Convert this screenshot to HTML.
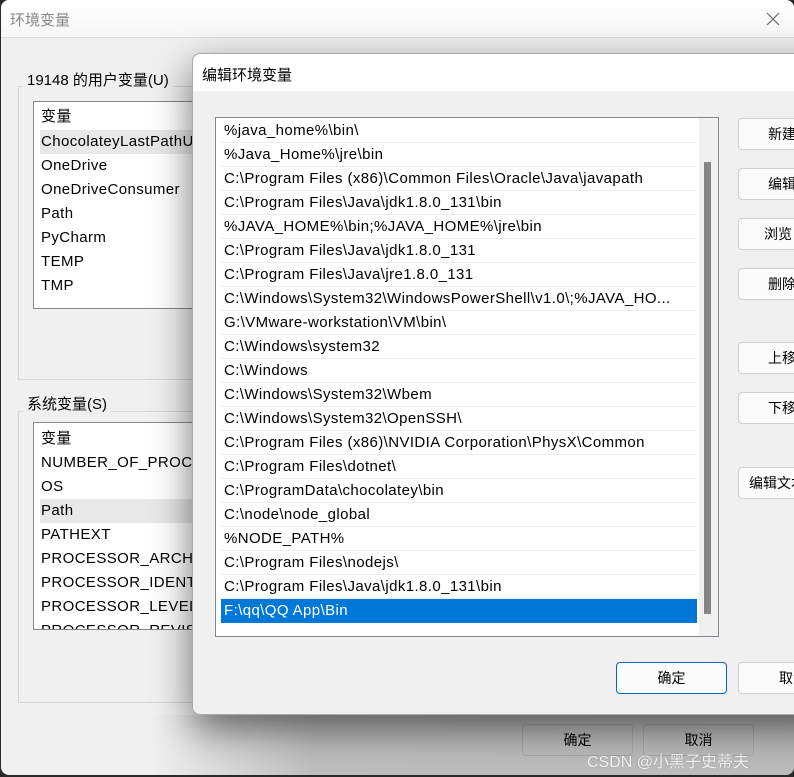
<!DOCTYPE html>
<html><head><meta charset="utf-8"><style>
*{margin:0;padding:0;box-sizing:border-box}
body{width:794px;height:777px;background:#2a2a2a;position:relative;overflow:hidden;font-family:"Liberation Sans","Noto Sans CJK SC",sans-serif;font-size:15px;color:#000}
.abs{position:absolute}
#outer{left:1px;top:0;width:793px;height:775px;background:#f0f0f0;border-radius:8px;overflow:hidden}
#otitle{left:0;top:0;width:793px;height:38px;background:linear-gradient(#fff,#f7f7f7);border-bottom:1px solid #ddd}
.grp{border:1px solid #d6d6d6}
.list{background:#fff;border:1px solid #828790;overflow:hidden;letter-spacing:0.4px}
.it{position:absolute;left:7px;height:24px;line-height:24px;white-space:nowrap}
#inner{left:192px;top:53px;width:640px;height:662px;background:#f0f0f0;border-radius:8px;border:1px solid #aaa;box-shadow:0 14px 40px rgba(0,0,0,.55)}
.row{position:absolute;left:5px;width:476px;height:24px;line-height:24px;padding-left:3px;border-bottom:1px solid #ececec;white-space:nowrap;overflow:hidden}
.btn{position:absolute;height:32px;background:#fbfbfb;border:1px solid #d0d0d0;border-radius:4px;text-align:center;line-height:30px;font-size:14px;white-space:nowrap;overflow:hidden}
.rb{width:110px;text-align:left;padding-left:29px}
</style></head><body>
<div id="outer" class="abs">
 <div id="otitle" class="abs"><span class="abs" style="left:9px;top:9px;color:#888">环境变量</span>
  <svg class="abs" style="left:765px;top:12px" width="14" height="14"><path d="M1 1L13 13M13 1L1 13" stroke="#666" stroke-width="1.2"/></svg></div>
 <div class="abs grp" style="left:17px;top:86px;width:200px;height:294px"></div>
 <span class="abs" style="left:22px;top:69px;background:#f0f0f0;padding:0 4px">19148 的用户变量(U)</span>
 <div class="abs list" style="left:32px;top:101px;width:200px;height:208px">
  <div class="it" style="top:3px">变量</div>
  <div class="abs" style="left:6px;top:28px;width:200px;height:24px;background:#e8e8e8"></div>
  <div class="it" style="top:28px">ChocolateyLastPathUpdate</div>
  <div class="it" style="top:52px">OneDrive</div>
  <div class="it" style="top:76px">OneDriveConsumer</div>
  <div class="it" style="top:100px">Path</div>
  <div class="it" style="top:124px">PyCharm</div>
  <div class="it" style="top:148px">TEMP</div>
  <div class="it" style="top:172px">TMP</div>
 </div>
 <div class="abs grp" style="left:17px;top:411px;width:200px;height:292px"></div>
 <span class="abs" style="left:22px;top:393px;background:#f0f0f0;padding:0 4px">系统变量(S)</span>
 <div class="abs list" style="left:32px;top:422px;width:200px;height:208px">
  <div class="it" style="top:4px">变量</div>
  <div class="it" style="top:28px">NUMBER_OF_PROCESSORS</div>
  <div class="it" style="top:52px">OS</div>
  <div class="abs" style="left:6px;top:76px;width:200px;height:24px;background:#e8e8e8"></div>
  <div class="it" style="top:76px">Path</div>
  <div class="it" style="top:100px">PATHEXT</div>
  <div class="it" style="top:124px">PROCESSOR_ARCHITECTURE</div>
  <div class="it" style="top:148px">PROCESSOR_IDENTIFIER</div>
  <div class="it" style="top:172px">PROCESSOR_LEVEL</div>
  <div class="it" style="top:196px">PROCESSOR_REVISION</div>
 </div>
 <div class="abs" style="left:150px;top:715px;width:643px;height:60px;background:linear-gradient(90deg,rgba(160,160,160,0),rgba(170,170,170,.7) 25%,rgba(175,175,175,.8))"></div>
 <div class="btn" style="left:521px;top:724px;width:111px;background:transparent;border-color:#aaa">确定</div>
 <div class="btn" style="left:642px;top:724px;width:111px;background:transparent;border-color:#aaa">取消</div>
 <span class="abs" style="left:586px;top:748px;color:#fff;font-size:16px;text-shadow:0 0 1px #777;opacity:.9">CSDN @小黑子史蒂夫</span>
</div>
<div id="inner" class="abs">
 <div class="abs" style="left:0;top:0;width:640px;height:37px;background:#fff;border-radius:8px 8px 0 0"></div>
 <span class="abs" style="left:9px;top:10px">编辑环境变量</span>
 <div class="abs list" style="left:22px;top:63px;width:504px;height:520px">
  <div class="row" style="top:1px">%java_home%\bin\</div>
  <div class="row" style="top:25px">%Java_Home%\jre\bin</div>
  <div class="row" style="top:49px">C:\Program Files (x86)\Common Files\Oracle\Java\javapath</div>
  <div class="row" style="top:73px">C:\Program Files\Java\jdk1.8.0_131\bin</div>
  <div class="row" style="top:97px">%JAVA_HOME%\bin;%JAVA_HOME%\jre\bin</div>
  <div class="row" style="top:121px">C:\Program Files\Java\jdk1.8.0_131</div>
  <div class="row" style="top:145px">C:\Program Files\Java\jre1.8.0_131</div>
  <div class="row" style="top:169px">C:\Windows\System32\WindowsPowerShell\v1.0\;%JAVA_HO...</div>
  <div class="row" style="top:193px">G:\VMware-workstation\VM\bin\</div>
  <div class="row" style="top:217px">C:\Windows\system32</div>
  <div class="row" style="top:241px">C:\Windows</div>
  <div class="row" style="top:265px">C:\Windows\System32\Wbem</div>
  <div class="row" style="top:289px">C:\Windows\System32\OpenSSH\</div>
  <div class="row" style="top:313px">C:\Program Files (x86)\NVIDIA Corporation\PhysX\Common</div>
  <div class="row" style="top:337px">C:\Program Files\dotnet\</div>
  <div class="row" style="top:361px">C:\ProgramData\chocolatey\bin</div>
  <div class="row" style="top:385px">C:\node\node_global</div>
  <div class="row" style="top:409px">%NODE_PATH%</div>
  <div class="row" style="top:433px">C:\Program Files\nodejs\</div>
  <div class="row" style="top:457px">C:\Program Files\Java\jdk1.8.0_131\bin</div>
  <div class="row" style="top:481px;background:#0078d7;color:#fff;border:none">F:\qq\QQ App\Bin</div>
  <div class="abs" style="left:483px;top:0;width:19px;height:518px;background:#f0f0f0"></div>
  <div class="abs" style="left:488px;top:44px;width:7px;height:452px;background:#858585"></div>
 </div>
 <div class="btn rb" style="left:545px;top:64px">新建</div>
 <div class="btn rb" style="left:545px;top:114px">编辑</div>
 <div class="btn rb" style="left:545px;top:164px;padding-left:25px">浏览</div>
 <div class="btn rb" style="left:545px;top:214px">删除</div>
 <div class="btn rb" style="left:545px;top:288px">上移</div>
 <div class="btn rb" style="left:545px;top:338px">下移</div>
 <div class="btn rb" style="left:545px;top:413px;padding-left:10px">编辑文本</div>
 <div class="btn" style="left:423px;top:608px;width:111px;border-color:#0067c0">确定</div>
 <div class="btn rb" style="left:545px;top:608px;padding-left:40px">取消</div>
</div>
</body></html>
